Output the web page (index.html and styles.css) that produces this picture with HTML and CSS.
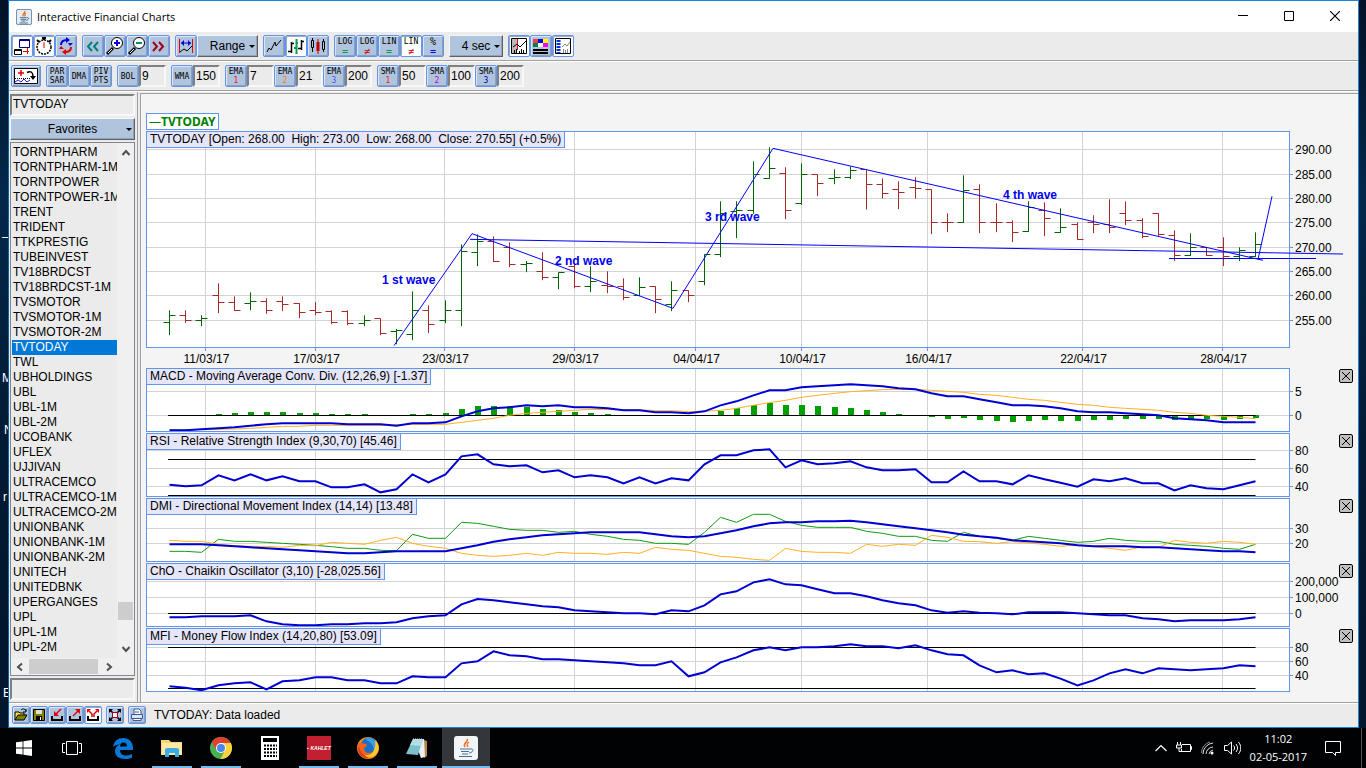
FILE: index.html
```html
<!DOCTYPE html>
<html lang="en">
<head>
    <meta charset="UTF-8">
    <meta name="viewport" content="width=device-width, initial-scale=1.0">
    <title>Interactive Financial Charts</title>
    <link rel="stylesheet" href="styles.css">
</head>
<body>
    <!-- Desktop labels peeking out behind the window -->
    <div class="desktop-labels" aria-hidden="true">
        <span class="peek peek-1">–</span>
        <span class="peek peek-2">M</span>
        <span class="peek peek-3">N</span>
        <span class="peek peek-4">r</span>
        <span class="peek peek-5">E</span>
    </div>

    <div class="window">
        <header class="titlebar">
            <svg class="java-icon" viewBox="0 0 24 24" width="16" height="16">
                <rect x="0.5" y="0.5" width="23" height="23" rx="3" fill="#e4ebf1" stroke="#5f7f9f" stroke-width="1.500"/>
                <path d="M13 3c2 3-5 4-2 8M15 6c-3 2-2 3-1 5" fill="none" stroke="#e8762c" stroke-width="2"/>
                <path d="M6 13h10M7 15.500h8M8 18h6M5 21h13M16 13c5-1 3 4-1 4" fill="none" stroke="#4b7195" stroke-width="1.500"/>
            </svg>
            <h1>Interactive Financial Charts</h1>
            <div class="window-controls">
                <button type="button" aria-label="Minimize"><svg viewBox="0 0 10 10" width="10" height="10"><path d="M0 4.500h10" stroke="#000"/></svg></button>
                <button type="button" aria-label="Maximize"><svg viewBox="0 0 10 10" width="10" height="10"><path d="M.5.500h9v9h-9z" fill="none" stroke="#000"/></svg></button>
                <button type="button" aria-label="Close"><svg viewBox="0 0 10 10" width="10" height="10"><path d="M0 0l10 10M10 0L0 10" stroke="#000" stroke-width="1.200"/></svg></button>
            </div>
        </header>

        <!-- Main toolbar -->
        <div class="toolbar">
            <div class="group">
                <button type="button" class="tool on" aria-label="Detach window"><svg viewBox="0 0 20 20"><path d="M7.500 3.500h10v8h-10zM7 4.500h11" fill="none" stroke="#000080"/><path d="M2.500 13.500h7v5h-7zM2 14.500h8" fill="none" stroke="#000"/><path d="M11 15.500h6M15.500 12v6" stroke="#e00000"/></svg></button>
                <button type="button" class="tool on" aria-label="Timer"><svg viewBox="0 0 20 20"><circle cx="10" cy="11" r="7" fill="none" stroke="#000" stroke-width="1.500" stroke-dasharray="2 1"/><path d="M8 2h4M10 2v2M3 4l2 2M17 4l-2 2" stroke="#000" stroke-width="2"/><path d="M10 6v6" stroke="#e00000"/></svg></button>
                <button type="button" class="tool" aria-label="Refresh"><svg viewBox="0 0 20 20"><path d="M5 9c0-4 2-5 6-5" fill="none" stroke="#0000d8" stroke-width="2"/><path d="M10 1l4 3-4 3zM12 7h5l-3 3z" fill="#0000d8"/><path d="M15 11c0 4-2 5-6 5" fill="none" stroke="#e00000" stroke-width="2"/><path d="M10 13l-4 3 4 3zM3 13h5l-3-3z" fill="#e00000"/></svg></button>
            </div>
            <div class="group">
                <button type="button" class="tool" aria-label="Scroll back"><svg viewBox="0 0 20 20"><path d="M9 6l-4 4.500L9 15M15 6l-4 4.500 4 4.500" fill="none" stroke="#008080" stroke-width="2"/></svg></button>
                <button type="button" class="tool" aria-label="Zoom in"><svg viewBox="0 0 20 20"><path d="M2 18l6-6" stroke="#000" stroke-width="3"/><path d="M3 17l4-4" stroke="#fff"/><circle cx="12" cy="7" r="5.500" fill="#fff" stroke="#000"/><path d="M9 7h6M12 4v6" stroke="#0000d8" stroke-width="2"/></svg></button>
                <button type="button" class="tool" aria-label="Zoom out"><svg viewBox="0 0 20 20"><path d="M2 18l6-6" stroke="#000" stroke-width="3"/><path d="M3 17l4-4" stroke="#fff"/><circle cx="12" cy="7" r="5.500" fill="#fff" stroke="#000"/><path d="M9 7h6" stroke="#009050" stroke-width="2"/></svg></button>
                <button type="button" class="tool" aria-label="Scroll forward"><svg viewBox="0 0 20 20"><path d="M4 6l4 4.500L4 15M10 6l4 4.500-4 4.500" fill="none" stroke="#a00020" stroke-width="2"/></svg></button>
            </div>
            <div class="group">
                <button type="button" class="tool" aria-label="Fit range"><svg viewBox="0 0 20 20"><path d="M3.500 3v14M16.500 3v14" stroke="#e00000"/><path d="M5 7h10" stroke="#0000d8"/><path d="M8 4L5 7l3 3zM12 4l3 3-3 3z" fill="#0000d8"/><path d="M4 16l4-3 3 2 5-5" fill="none" stroke="#000"/></svg></button>
                <label class="combo combo-range"><select aria-label="Range"><option>Range</option></select></label>
            </div>
            <div class="group">
                <button type="button" class="tool" aria-label="Line chart"><svg viewBox="0 0 20 20"><path d="M3 16l2-4 2 2 4-8 1 4 5-6" fill="none" stroke="#000"/></svg></button>
                <button type="button" class="tool on" aria-label="Bar chart"><svg viewBox="0 0 20 20"><path d="M5.500 6v11M2 15.500h3M5 7.500h3M15.500 4v10M12 12.500h3M15 5.500h3" stroke="#000" stroke-width="1.500"/><path d="M10.500 3v15M8 12h2M10 7h2" stroke="#00a050" stroke-width="2"/></svg></button>
                <button type="button" class="tool" aria-label="Candle chart"><svg viewBox="0 0 20 20"><path d="M4.500 2v14M15.500 3v13" stroke="#000"/><path d="M3.500 4.500h2v7h-2zM14.500 5.500h2v8h-2z" fill="#b0c4de" stroke="#000"/><path d="M10 3v15" stroke="#c00000"/><path d="M8.500 6h3v9h-3z" fill="#c00000"/></svg></button>
            </div>
            <div class="group">
                <button type="button" class="tool caps">LOG<b class="green">=</b></button>
                <button type="button" class="tool caps">LOG<b class="red">≠</b></button>
                <button type="button" class="tool caps">LIN<b class="green">=</b></button>
                <button type="button" class="tool caps on">LIN<b class="red">≠</b></button>
                <button type="button" class="tool caps"><span class="percent">%</span><b class="blue">=</b></button>
            </div>
            <label class="combo combo-sec"><select aria-label="Refresh interval"><option>4 sec</option></select></label>
            <div class="group">
                <button type="button" class="tool on" aria-label="Crosshair"><svg viewBox="0 0 20 20"><path d="M2.500 2.500h15v15h-15z" fill="#fff" stroke="#000"/><path d="M3 3h5v14H3z" fill="#bbb"/><path d="M8.500 3v11" stroke="#e00000"/><path d="M4 11l4-3 3 3 6-6M5.500 14v3M7.500 13v4M10.500 15v2M12.500 13v4M14.500 14v3" fill="none" stroke="#000"/></svg></button>
                <button type="button" class="tool" aria-label="Colors"><svg viewBox="0 0 20 20"><path d="M2 3h5v4H2z" fill="#f04050"/><path d="M7 3h5v4H7z" fill="#00f"/><path d="M12 3h5v4h-5z" fill="#ff0"/><path d="M2 7h5v4H2z" fill="#008040"/><path d="M7 7h5v4H7z" fill="#fff"/><path d="M12 7h5v4h-5z" fill="#f0f"/><path d="M2 14h15M2 17h15" stroke="#000" stroke-width="2"/></svg></button>
                <button type="button" class="tool on" aria-label="Symbol list"><svg viewBox="0 0 20 20"><path d="M2.500 2.500h15v15h-15z" fill="#fff" stroke="#000"/><path d="M5.500 4v13" stroke="#0030e0" stroke-width="4" stroke-dasharray="2 1"/><path d="M9 11l3-3 2 2 3-4M10.500 13v4M12.500 14v3M14.500 13v4" fill="none" stroke="#888"/></svg></button>
            </div>
        </div>

        <!-- Overlay toolbar -->
        <div class="toolbar">
            <button type="button" class="tool wide" aria-label="Add study"><svg viewBox="0 0 28 20"><path d="M2.500 2.500h23v15h-23z" fill="#fff" stroke="#000"/><path d="M6 7h6M9 4v6" stroke="#e00000" stroke-width="1.500"/><path d="M15 6.500c4-2 6 0 6 4" fill="none" stroke="#000" stroke-width="1.500"/><path d="M18 10h6l-3 4z"/><path d="M3 12.500h15" stroke="#000" stroke-dasharray="1 1"/><path d="M3 16l3-2 3 2 3-3 3 3 3-2" fill="none" stroke="#2020f0"/></svg></button>
            <div class="group">
                <button type="button" class="tool">PAR SAR</button>
                <button type="button" class="tool">DMA</button>
                <button type="button" class="tool">PIV PTS</button>
            </div>
            <div class="group">
                <button type="button" class="tool">BOL</button>
                <input class="period" type="text" value="9" aria-label="BOL period">
            </div>
            <div class="group">
                <button type="button" class="tool">WMA</button>
                <input class="period" type="text" value="150" aria-label="WMA period">
            </div>
            <div class="group">
                <button type="button" class="tool">EMA <span class="n-red">1</span></button>
                <input class="period" type="text" value="7" aria-label="EMA 1 period">
                <button type="button" class="tool">EMA <span class="n-orange">2</span></button>
                <input class="period" type="text" value="21" aria-label="EMA 2 period">
                <button type="button" class="tool">EMA <span class="n-violet">3</span></button>
                <input class="period" type="text" value="200" aria-label="EMA 3 period">
            </div>
            <div class="group">
                <button type="button" class="tool">SMA <span class="n-red">1</span></button>
                <input class="period" type="text" value="50" aria-label="SMA 1 period">
                <button type="button" class="tool">SMA <span class="n-magenta">2</span></button>
                <input class="period" type="text" value="100" aria-label="SMA 2 period">
                <button type="button" class="tool">SMA <span class="n-blue">3</span></button>
                <input class="period" type="text" value="200" aria-label="SMA 3 period">
            </div>
        </div>

        <main>
            <!-- Symbol list -->
            <aside>
                <input class="field" type="text" value="TVTODAY" aria-label="Symbol">
                <label class="combo combo-fav"><select aria-label="Symbol group"><option>Favorites</option></select></label>
                <div class="listbox">
                    <div class="list-row">
                        <ul role="listbox" aria-label="Symbols">
                            <li>TORNTPHARM</li>
                            <li>TORNTPHARM-1M</li>
                            <li>TORNTPOWER</li>
                            <li>TORNTPOWER-1M</li>
                            <li>TRENT</li>
                            <li>TRIDENT</li>
                            <li>TTKPRESTIG</li>
                            <li>TUBEINVEST</li>
                            <li>TV18BRDCST</li>
                            <li>TV18BRDCST-1M</li>
                            <li>TVSMOTOR</li>
                            <li>TVSMOTOR-1M</li>
                            <li>TVSMOTOR-2M</li>
                            <li class="selected">TVTODAY</li>
                            <li>TWL</li>
                            <li>UBHOLDINGS</li>
                            <li>UBL</li>
                            <li>UBL-1M</li>
                            <li>UBL-2M</li>
                            <li>UCOBANK</li>
                            <li>UFLEX</li>
                            <li>UJJIVAN</li>
                            <li>ULTRACEMCO</li>
                            <li>ULTRACEMCO-1M</li>
                            <li>ULTRACEMCO-2M</li>
                            <li>UNIONBANK</li>
                            <li>UNIONBANK-1M</li>
                            <li>UNIONBANK-2M</li>
                            <li>UNITECH</li>
                            <li>UNITEDBNK</li>
                            <li>UPERGANGES</li>
                            <li>UPL</li>
                            <li>UPL-1M</li>
                            <li>UPL-2M</li>
                        </ul>
                        <div class="vscroll">
                            <svg viewBox="0 0 10 10" width="10" height="10"><path d="M1.500 7L5 3l3.500 4" fill="none" stroke="#505050" stroke-width="2"/></svg>
                            <div class="vthumb"></div>
                            <svg viewBox="0 0 10 10" width="10" height="10"><path d="M1.500 3L5 7l3.500-4" fill="none" stroke="#505050" stroke-width="2"/></svg>
                        </div>
                    </div>
                    <div class="hscroll">
                        <svg viewBox="0 0 10 10" width="10" height="10"><path d="M7 1.500L3 5l4 3.500" fill="none" stroke="#505050" stroke-width="2"/></svg>
                        <div class="hthumb"></div>
                        <svg viewBox="0 0 10 10" width="10" height="10"><path d="M3 1.500L7 5 3 8.500" fill="none" stroke="#505050" stroke-width="2"/></svg>
                    </div>
                </div>
                <input class="field" type="text" aria-label="Filter">
            </aside>

            <!-- Charts -->
            <div class="charts">
                <div class="legend"><span>—</span>TVTODAY</div>
                <section class="panel price">
                    <svg class="plot" id="price"></svg>
                    <h2>TVTODAY [Open: 268.00  High: 273.00  Low: 268.00  Close: 270.55] (+0.5%)</h2>
                </section>
                <section class="panel">
                    <svg class="plot" id="macd"></svg>
                    <h2>MACD - Moving Average Conv. Div. (12,26,9) [-1.37]</h2>
                    <button type="button" class="close" aria-label="Close MACD"><svg viewBox="0 0 12 12"><path d="M2 2l8 8M10 2l-8 8" stroke="#000"/></svg></button>
                </section>
                <section class="panel">
                    <svg class="plot" id="rsi"></svg>
                    <h2>RSI - Relative Strength Index (9,30,70) [45.46]</h2>
                    <button type="button" class="close" aria-label="Close RSI"><svg viewBox="0 0 12 12"><path d="M2 2l8 8M10 2l-8 8" stroke="#000"/></svg></button>
                </section>
                <section class="panel">
                    <svg class="plot" id="dmi"></svg>
                    <h2>DMI - Directional Movement Index (14,14) [13.48]</h2>
                    <button type="button" class="close" aria-label="Close DMI"><svg viewBox="0 0 12 12"><path d="M2 2l8 8M10 2l-8 8" stroke="#000"/></svg></button>
                </section>
                <section class="panel">
                    <svg class="plot" id="cho"></svg>
                    <h2>ChO - Chaikin Oscillator (3,10) [-28,025.56]</h2>
                    <button type="button" class="close" aria-label="Close ChO"><svg viewBox="0 0 12 12"><path d="M2 2l8 8M10 2l-8 8" stroke="#000"/></svg></button>
                </section>
                <section class="panel">
                    <svg class="plot" id="mfi"></svg>
                    <h2>MFI - Money Flow Index (14,20,80) [53.09]</h2>
                    <button type="button" class="close" aria-label="Close MFI"><svg viewBox="0 0 12 12"><path d="M2 2l8 8M10 2l-8 8" stroke="#000"/></svg></button>
                </section>
            </div>
        </main>

        <!-- Status bar -->
        <footer class="statusbar">
            <div class="group">
                <button type="button" class="tool small" aria-label="Open"><svg viewBox="0 0 16 16"><path d="M2 13V5h4l1 1h4v2" fill="#ffe040" stroke="#000"/><path d="M2 13l3-5h9l-3 5z" fill="#808000" stroke="#000"/><path d="M8 3c2-2 4-1 5 1M13 2v3h-3" fill="none" stroke="#000"/></svg></button>
                <button type="button" class="tool small" aria-label="Save"><svg viewBox="0 0 16 16"><path d="M2.500 2.500h11v11h-11z" fill="#808000" stroke="#000"/><path d="M5 3h6v4H5z" fill="#ddd"/><path d="M5 9h6v5H5z"/><path d="M9 10h1v3H9z" fill="#fff"/></svg></button>
                <button type="button" class="tool small" aria-label="Import"><svg viewBox="0 0 16 16"><path d="M3 9v4h10V9" fill="none" stroke="#000" stroke-width="2"/><path d="M12 2L7 7" stroke="#e00000" stroke-width="1.500"/><path d="M5 4v5h5z" fill="#e00000"/></svg></button>
                <button type="button" class="tool small" aria-label="Export"><svg viewBox="0 0 16 16"><path d="M3 9v4h10V9" fill="none" stroke="#000" stroke-width="2"/><path d="M6 9l5-5" stroke="#e00000" stroke-width="1.500"/><path d="M8 2h5v5z" fill="#e00000"/></svg></button>
                <button type="button" class="tool small on" aria-label="Export all"><svg viewBox="0 0 16 16"><path d="M3 9v4h10V9" fill="none" stroke="#000" stroke-width="2"/><path d="M7 10V7L4 4M9 10V7l3-3" fill="none" stroke="#e00000" stroke-width="1.500"/><path d="M2 2h4L2 6zM14 2h-4l4 4z" fill="#e00000"/></svg></button>
            </div>
            <button type="button" class="tool small" aria-label="Full screen"><svg viewBox="0 0 16 16"><path d="M2 6V2h4zM10 2h4v4zM14 10v4h-4zM6 14H2v-4z"/><path d="M3 3l3 3M13 3l-3 3M13 13l-3-3M3 13l3-3" stroke="#000" stroke-width="1.500"/><path d="M5.500 5.500h5v5h-5z" fill="#fff" stroke="#a00020"/></svg></button>
            <button type="button" class="tool small" aria-label="Print"><svg viewBox="0 0 16 16"><path d="M5 7V2h5l2 2v3" fill="#fff" stroke="#3c5a96"/><path d="M6 5h4" stroke="#3c5a96"/><path d="M2.500 7.500h11v4h-11z" fill="#d8e4f8" stroke="#3c5a96"/><path d="M4 11.500h8v2H4z" fill="#fff" stroke="#3c5a96"/></svg></button>
            <p>TVTODAY: Data loaded</p>
        </footer>
    </div>

    <!-- Taskbar -->
    <div class="taskbar">
        <button type="button" class="task" aria-label="Start"><svg viewBox="0 0 16 16" width="16" height="16"><path d="M0 2.300L6.600 1.400v6.200H0zM7.400 1.300L16 0v7.600H7.400zM0 8.400h6.600v6.200L0 13.700zM7.400 8.400H16V16l-8.600-1.300z" fill="#fff"/></svg></button>
        <button type="button" class="task" aria-label="Task view"><svg viewBox="0 0 20 16" width="20" height="16"><path d="M4.500 1.500h11v13h-11zM3 3.500H.5v9H3M17 3.500h2.500v9H17" fill="none" stroke="#fff"/></svg></button>
        <div class="tasks">
            <button type="button" class="task" aria-label="Edge"><svg viewBox="0 0 22 22" width="22" height="22"><path d="M1 10C2 4 6 1 11 1c6 0 10 4 10 10v2H8c0 4 3 5.500 6 5.500 2 0 4-.5 6-1.500v3.500c-2 1-4 1.500-7 1.500-6 0-10-3-10-8 0-3 2-5.500 5-7-2 .5-5 1-7 3zM8 9.500h7c0-3-1.500-4-3.500-4S8 7 8 9.500z" fill="#0a78d8"/></svg></button>
            <button type="button" class="task open" aria-label="File Explorer"><svg viewBox="0 0 22 20" width="22" height="20"><path d="M0 2h8l2 2h11v13H0z" fill="#f5d67a"/><path d="M1 5h20v12H1z" fill="#ffe9a2"/><path d="M4 19v-8l2-1h10l2 1v8h-4v-4H8v4z" fill="#3aade4"/></svg></button>
            <button type="button" class="task open" aria-label="Chrome"><svg viewBox="0 0 22 22" width="22" height="22"><circle cx="11" cy="11" r="11" fill="#4caf50"/><path d="M11 11L1.500 5.500A11 11 0 0 1 20.500 5.500z" fill="#e0402f"/><path d="M11 6h9.800A11 11 0 0 1 10.500 22L15 13z" fill="#fdd23c"/><path d="M2 5l4.500 8L11 6z" fill="#e0402f"/><circle cx="11" cy="11" r="5" fill="#fff"/><circle cx="11" cy="11" r="4" fill="#4587f0"/></svg></button>
            <button type="button" class="task" aria-label="Calculator"><svg viewBox="0 0 18 24" width="18" height="24"><path d="M0 0h18v24H0z" fill="#fff"/><path d="M2 2h14v4H2z"/><path d="M3 9.500h13M3 13h13M3 16.500h13M3 20h13" stroke="#000" stroke-width="2" stroke-dasharray="2 1"/></svg></button>
            <button type="button" class="task open" aria-label="Trading app"><span class="red-tile">▪ KAHLET</span></button>
            <button type="button" class="task open" aria-label="Firefox"><svg viewBox="0 0 22 22" width="22" height="22"><circle cx="11" cy="11" r="11" fill="#f7921e"/><circle cx="12" cy="9" r="8.500" fill="#1f6fc4"/><path d="M8 2c3-2 8-1 10 2 2 4 1 8-1 10 0-5-2-8-9-12z" fill="#3ba2e8"/><path d="M1 5l3 1 5 1 1 2-3 2c0 5 5 6 8 4 0 3-3 5-6 4-5-1-8-6-8-14z" fill="#f0641e"/><path d="M18 3c5 5 5 12-1 16-5 3-12 1-14-3 8 6 17 0 15-13z" fill="#ffc62e"/><path d="M1 8c-2 8 4 15 12 13-5-1-10-6-12-13z" fill="#d8401c"/></svg></button>
            <button type="button" class="task open" aria-label="Notepad"><svg viewBox="0 0 22 22" width="22" height="22"><path d="M18 3l3 1v15l-3 2z" fill="#b58a48"/><path d="M8 2h10l1 18-4 1z" fill="#e8f0f2"/><path d="M7 2h10l-5 16-12-1z" fill="#7cc0cc"/><path d="M7 2h10l-2 7-11-1z" fill="#b4dde4"/><path d="M7 2h10" stroke="#ddd" stroke-dasharray="1 1"/></svg></button>
            <button type="button" class="task open active" aria-label="Interactive Financial Charts"><svg viewBox="0 0 24 24" width="24" height="24"><rect width="24" height="24" rx="3" fill="#f2f5f8"/><path d="M13 3c2 3-5 4-2 8M15 6c-3 2-2 3-1 5" fill="none" stroke="#e8762c" stroke-width="1.500"/><path d="M6 13h10M7 15.500h8M8 18h6M5 20.500h13M16 13c5-1 3 4-1 4" fill="none" stroke="#4b7195"/></svg></button>
        </div>
        <div class="tray">
            <svg viewBox="0 0 12 8" width="12" height="8"><path d="M.5 7L6 1.500 11.500 7" fill="none" stroke="#fff" stroke-width="1.200"/></svg>
            <svg viewBox="0 0 16 14" width="16" height="14"><path d="M6 3.500h8.500v7H5.500V8M14.500 5.500h1v3h-1M1.500 1v3M4.500 1v3M.5 4h5v3h-5zM3 7v3.500h3" fill="none" stroke="#fff"/></svg>
            <svg viewBox="0 0 14 14" width="14" height="14"><path d="M2 13A11 11 0 0 1 12 2M5 13a8 8 0 0 1 7-7M8 13a5 5 0 0 1 4-4" fill="none" stroke="#ddd"/><path d="M.500 12A11 11 0 0 1 9 1" fill="none" stroke="#888"/><circle cx="11" cy="12" r="1.500" fill="#fff"/></svg>
            <svg viewBox="0 0 17 14" width="17" height="14"><path d="M.5 4.500h3L7.500 1v12L3.500 9.500h-3zM9.500 4.500c1.500 2 1.500 3 0 5M12 3c2 3 2 5 0 8M14.500 1c3 4 3 8 0 12" fill="none" stroke="#fff"/></svg>
            <div class="clock"><span>11:02</span><span>02-05-2017</span></div>
            <svg class="notify" viewBox="0 0 16 16" width="16" height="16"><path d="M.5 1.500h15v11h-5v3l-3-3h-7z" fill="none" stroke="#fff"/></svg>
        </div>
    </div>
    <script src="charts.js"></script>
</body>
</html>
```
FILE: styles.css
```css
* {
    box-sizing: border-box;
}

body {
    margin: 0;
    height: 100vh;
    display: flex;
    flex-direction: column;
    overflow: hidden;
    background: linear-gradient(#021226, #03284a 25%, #021a33 60%, #02152b);
    font-family: "Liberation Sans", Arial, sans-serif;
    font-size: 12px;
    color: #000;
}

h1, h2, p, ul {
    margin: 0;
    padding: 0;
    font-size: 12px;
    font-weight: normal;
}

button, input, select {
    font-family: inherit;
    font-size: 12px;
    color: inherit;
    margin: 0;
    padding: 0;
    border-radius: 0;
}

/* Desktop behind the window */
.peek {
    position: absolute;
    color: #fff;
    line-height: 14px;
}

.peek-1 { left: 2px; top: 230px; }
.peek-2 { left: 2px; top: 371px; }
.peek-3 { left: 4px; top: 423px; }
.peek-4 { left: 3px; top: 490px; }
.peek-5 { left: 3px; top: 686px; }

/* Window frame */
.window {
    position: relative;
    flex: 1;
    min-height: 0;
    margin: 0 7px 0 8px;
    display: flex;
    flex-direction: column;
    border: 1px solid #1883d7;
    border-left-color: #0a64ad;
    background: #ebebeb;
}

.titlebar {
    display: flex;
    align-items: center;
    height: 31px;
    padding-left: 7px;
    background: #fff;
}

.titlebar h1 {
    flex: 1;
    margin-left: 5px;
    font-family: "Open Sans", "Noto Sans", sans-serif;
    font-size: 11px;
}

.window-controls {
    display: flex;
    height: 100%;
}

.window-controls button {
    width: 46px;
    border: 0;
    background: none;
}

/* Toolbars */
.toolbar {
    display: flex;
    gap: 5px;
    height: 30px;
    padding: 3px 2px;
    border-bottom: 1px solid #fff;
    box-shadow: inset 0 -1px #a0a0a0;
}

.group {
    display: flex;
}

.tool {
    display: flex;
    flex-direction: column;
    align-items: center;
    justify-content: center;
    width: 22px;
    height: 22px;
    border: 1px solid #6495ed;
    border-radius: 2px;
    background: #b0c4de;
    box-shadow: inset 1px 1px #dce6f2, inset -1px -1px #8ca0bc;
    font-family: "DejaVu Sans Mono", monospace;
    font-size: 8px;
    line-height: 9px;
    white-space: normal;
}

.tool svg {
    display: block;
    width: 20px;
    height: 20px;
}

.tool.wide {
    width: 30px;
}

.tool.wide svg {
    width: 28px;
}

.tool.on {
    background: #fff;
    box-shadow: inset 1px 1px #9ab;
}

.tool.caps {
    line-height: 10px;
}

.tool.caps b {
    font-size: 10px;
    font-weight: normal;
    line-height: 9px;
}

.percent {
    font-size: 10px;
}

.green { color: #00a050; }
.red { color: #d00000; }
.blue { color: #0000ff; }
.n-red { color: #f02000; }
.n-orange { color: #ff8000; }
.n-violet { color: #5050f0; }
.n-magenta { color: #c000c0; }
.n-blue { color: #0000c0; }

.period {
    width: 27px;
    height: 22px;
    padding-left: 1px;
    border: 2px solid;
    border-color: #808080 #f8f8f8 #f8f8f8 #808080;
    background: #ebebeb;
}

/* Drop-downs */
.combo {
    position: relative;
    display: block;
    height: 22px;
}

.combo select {
    appearance: none;
    width: 100%;
    height: 100%;
    border: 1px solid;
    border-color: #f4f8fc #606060 #606060 #f4f8fc;
    box-shadow: inset -1px -1px #90a4c0;
    background: #b0c4de;
    text-align: center;
    text-align-last: center;
}

.combo::after {
    content: "";
    position: absolute;
    right: 3px;
    top: 10px;
    border: 3px solid transparent;
    border-top-color: #000;
    border-bottom: 0;
}

.combo-range {
    width: 61px;
}

.combo-sec {
    width: 54px;
}

/* Layout of list and charts */
main {
    flex: 1;
    min-height: 0;
    display: flex;
}

aside {
    width: 129px;
    padding: 2px 2px 2px 1px;
    display: flex;
    flex-direction: column;
    gap: 2px;
    border-right: 1px solid #a0a0a0;
}

.field {
    width: 100%;
    height: 22px;
    padding: 0 1px 2px;
    border: 2px solid;
    border-color: #808080 #f8f8f8 #f8f8f8 #808080;
    background: #ebebeb;
}

.listbox {
    flex: 1;
    min-height: 0;
    display: flex;
    flex-direction: column;
    border: 1px solid #828790;
    background: #ebebeb;
}

.list-row {
    flex: 1;
    min-height: 0;
    display: flex;
}

.list-row ul {
    flex: 1;
    min-width: 0;
    padding: 2px 0 0 1px;
    overflow: hidden;
    list-style: none;
}

.list-row li {
    height: 15px;
    padding-left: 1px;
    line-height: 15px;
    white-space: nowrap;
    overflow: hidden;
}

.list-row li.selected {
    background: #0078d7;
    color: #fff;
}

.vscroll {
    width: 17px;
    padding: 5px 0 4px;
    display: flex;
    flex-direction: column;
    align-items: center;
    background: #f0f0f0;
}

.vthumb {
    width: 15px;
    height: 18px;
    margin-top: auto;
    margin-bottom: 24px;
    background: #cdcdcd;
}

.hscroll {
    display: flex;
    align-items: center;
    height: 17px;
    padding: 1px 20px 1px 4px;
    gap: 4px;
    background: #f0f0f0;
}

.hthumb {
    flex: 1;
    height: 15px;
    margin-right: 2px;
    background: #cdcdcd;
}

/* Charts */
.charts {
    flex: 1;
    min-width: 0;
    margin: 1px 0 0 2px;
    padding: 19px 1px 0 5px;
    border-top: 1px solid #a0a0a0;
    border-left: 1px solid #a0a0a0;
    background: #f4f4f4;
}

.legend {
    width: max-content;
    height: 17px;
    margin-bottom: 1px;
    padding: 0 2px;
    border: 1px solid #6495ed;
    background: #fff;
    color: #008000;
    font-family: "Noto Sans", sans-serif;
    font-weight: bold;
    line-height: 15px;
}

.legend span {
    font-weight: normal;
}

.panel {
    position: relative;
    height: 65px;
}

.panel.price {
    height: 237px;
}

.plot {
    display: block;
    width: 100%;
    height: 100%;
}

.panel h2 {
    position: absolute;
    top: 0;
    left: 0;
    height: 17px;
    padding: 0 3px;
    border: 1px solid #6495ed;
    background: #e6e6fa;
    line-height: 15px;
    white-space: pre;
}

.panel .close {
    position: absolute;
    top: 1px;
    right: 4px;
    width: 14px;
    height: 14px;
    border: 1px solid #000;
    border-radius: 2px;
    background: #c0c0c0;
}

.close svg {
    display: block;
}

.plot .grid { stroke: #d3d3d3; }
.plot .level { stroke: #000; }
.plot .frame { stroke: #6495ed; fill: none; }
.plot .back { fill: #fff; }
.plot .tick { stroke: #6495ed; }
.plot .up { stroke: #006400; }
.plot .down { stroke: #a52a2a; }
.plot .bars { fill: #00a000; }
.plot .trend { stroke: #0000ff; fill: none; }
.plot .note { fill: #0000ee; font-weight: bold; }
.plot .main { stroke: #0000d2; stroke-width: 2; fill: none; }
.plot .orange { stroke: #ffb020; fill: none; }
.plot .green-line { stroke: #109c10; fill: none; }

/* Status bar */
.statusbar {
    display: flex;
    align-items: center;
    gap: 4px;
    height: 25px;
    padding: 0 3px;
    border-top: 1px solid #a0a0a0;
    box-shadow: inset 0 1px #fff;
}

.tool.small {
    width: 18px;
    height: 18px;
}

.tool.small svg {
    width: 16px;
    height: 16px;
}

.statusbar p {
    margin-left: 4px;
}

/* Taskbar */
.taskbar {
    display: flex;
    align-items: stretch;
    height: 40px;
    background: #010204;
    color: #fff;
}

.task {
    display: flex;
    align-items: center;
    justify-content: center;
    position: relative;
    width: 48px;
    border: 0;
    background: none;
}

.tasks {
    flex: 1;
    display: flex;
    gap: 1px;
    margin-left: 3px;
}

.task.open::after {
    content: "";
    position: absolute;
    left: 4px;
    right: 4px;
    bottom: 0;
    height: 2px;
    background: #76b9ed;
}

.task.active {
    background: #33373b;
}

.task.active::after {
    left: 0;
    right: 0;
}

.red-tile {
    width: 24px;
    height: 24px;
    background: #c02030;
    color: #fff;
    font-size: 5px;
    font-style: italic;
    font-weight: bold;
    line-height: 24px;
    white-space: nowrap;
}

.tray {
    display: flex;
    align-items: center;
    gap: 9px;
    margin-right: 4px;
    padding-right: 20px;
    border-right: 1px solid #555;
}

.clock {
    display: flex;
    flex-direction: column;
    align-items: center;
    line-height: 18px;
    font-family: "Open Sans", "Noto Sans", sans-serif;
    font-size: 11px;
}

.notify {
    margin-left: 9px;
}
```
FILE: charts.js
```js
// Y readings are thirds of a pixel: the price chart counts from its own top,
// the indicators count from the top of the indicator stack.
const UNIT = 3;
const AXIS_WIDTH = 68;   // room right of the plot for the scale
const BASE_WIDTH = 1143; // plot width that the x readings refer to
const FIRST_BAR = 24;
const LAST_BAR = 1110;

const dates = [[59, '11/03/17'], [169, '17/03/17'], [298, '23/03/17'], [428, '29/03/17'], [549, '04/04/17'],
    [655, '10/04/17'], [781, '16/04/17'], [936, '22/04/17'], [1076, '28/04/17']];

// open, high, low, close
const bars = [
    [577, 541, 614, 556], [556, 541, 577, 571], [571, 556, 587, 565], [496, 460, 548, 517], [517, 499, 541, 541],
    [520, 487, 539, 514], [514, 505, 550, 541], [514, 499, 542, 523], [520, 520, 563, 547], [541, 516, 554, 547],
    [544, 541, 581, 577], [544, 541, 584, 580], [580, 556, 587, 571], [565, 565, 614, 610], [604, 597, 641, 601],
    [613, 484, 629, 541], [541, 526, 608, 583], [571, 511, 578, 541], [541, 343, 587, 364], [367, 313, 407, 334],
    [334, 319, 395, 394], [352, 337, 410, 403], [403, 393, 425, 400], [424, 367, 449, 442], [442, 427, 476, 427],
    [410, 404, 473, 469], [469, 409, 485, 454], [466, 424, 488, 469], [469, 445, 509, 502], [497, 442, 497, 472],
    [469, 469, 548, 508], [523, 454, 542, 481], [481, 481, 515, 496], [454, 373, 464, 373], [373, 214, 380, 250],
    [244, 214, 323, 241], [241, 94, 250, 133], [145, 52, 145, 115], [130, 112, 266, 241], [220, 100, 223, 133],
    [133, 133, 197, 160], [145, 118, 161, 142], [142, 110, 146, 121], [119, 119, 237, 163], [163, 145, 204, 190],
    [178, 154, 236, 187], [172, 142, 204, 175], [178, 178, 311, 277], [277, 250, 305, 277], [277, 136, 277, 181],
    [178, 163, 308, 277], [277, 220, 305, 277], [277, 271, 335, 307], [304, 214, 304, 232], [241, 217, 317, 265],
    [307, 235, 307, 292], [283, 277, 328, 328], [277, 256, 308, 283], [283, 208, 308, 292], [250, 214, 284, 271],
    [271, 265, 323, 319], [250, 250, 316, 313], [316, 301, 392, 376], [376, 310, 376, 352], [352, 352, 376, 376],
    [352, 322, 407, 380], [380, 352, 392, 361], [380, 307, 380, 343]
];

const priceScale = [[58, '290.00'], [133, '285.00'], [205, '280.00'], [277, '275.00'], [352, '270.00'],
    [424, '265.00'], [496, '260.00'], [571, '255.00']];

const trends = [
    [[248, 647], [326, 311], [527, 535], [627, 55], [1117, 391]],
    [[324, 328], [1197, 372]],
    [[1023, 385.5], [1170, 385.5]],
    [[1112, 388], [1126, 199]]
];

const notes = [[236, 461, '1 st wave'], [409, 404, '2 nd wave'], [559, 272, '3 rd wave'], [857, 206, '4 th wave']];

const indicators = [
    {
        id: 'macd',
        scale: [[94, '5'], [166, '0']],
        levels: [166],
        histogram: [166, 166, 166, 163, 160, 157, 157, 157, 160, 160, 163, 163, 163, 166, 166, 163, 163, 160, 148, 139,
            139, 139, 141, 148, 151, 157, 160, 163, 166, 166, 170, 170, 170, 166, 154, 145, 136, 128, 136, 136,
            139, 142, 145, 151, 157, 163, 166, 173, 179, 176, 182, 185, 188, 185, 182, 185, 185, 182, 182, 179,
            179, 179, 182, 182, 179, 182, 179, 176],
        lines: [
            ['orange', [209, 209, 208, 208, 207, 205, 202, 199, 199, 196, 196, 196, 196, 196, 194, 193, 193, 193, 187, 181,
                175, 166, 160, 157, 154, 151, 148, 149, 149, 149, 152, 152, 155, 154, 151, 145, 136, 128, 121, 112,
                106, 100, 95, 92, 89, 88, 88, 91, 94, 97, 103, 106, 112, 118, 121, 127, 133, 136, 142, 145,
                148, 151, 157, 160, 166, 169, 172, 176]],
            ['main', [211, 211, 208, 205, 202, 197, 193, 190, 190, 190, 190, 193, 193, 193, 197, 190, 190, 187, 169, 154,
                145, 142, 136, 139, 136, 142, 142, 145, 151, 151, 157, 157, 160, 154, 136, 124, 106, 91, 91, 82,
                79, 76, 73, 76, 79, 85, 88, 100, 109, 109, 118, 127, 136, 136, 139, 145, 154, 157, 157, 160,
                163, 166, 175, 178, 181, 187, 187, 187]]
        ]
    },
    {
        id: 'rsi',
        scale: [[271, '80'], [325, '60'], [379, '40']],
        levels: [298, 406],
        lines: [
            ['main', [374, 379, 376, 346, 361, 343, 361, 349, 364, 364, 382, 382, 373, 397, 388, 343, 367, 343, 289, 283,
                313, 319, 316, 337, 331, 352, 346, 352, 370, 352, 370, 355, 361, 313, 286, 286, 271, 268, 322, 301,
                313, 310, 304, 322, 331, 331, 328, 367, 367, 334, 364, 364, 373, 346, 358, 368, 380, 358, 364, 355,
                370, 370, 391, 376, 385, 388, 376, 364]]
        ]
    },
    {
        id: 'dmi',
        scale: [[505, '30'], [550, '20']],
        levels: [],
        lines: [
            ['green-line', [574, 574, 577, 538, 544, 544, 547, 550, 553, 556, 560, 565, 565, 571, 572, 523, 535, 535, 487, 490,
                499, 508, 511, 511, 517, 514, 523, 529, 538, 541, 550, 550, 553, 517, 472, 487, 463, 463, 484, 496,
                502, 502, 502, 514, 520, 529, 529, 541, 544, 517, 529, 535, 541, 529, 535, 541, 547, 544, 535, 541,
                544, 544, 553, 556, 559, 565, 568, 553]],
            ['orange', [541, 544, 544, 553, 557, 559, 559, 562, 556, 557, 547, 550, 553, 541, 532, 550, 559, 565, 580, 586,
                589, 586, 580, 586, 577, 580, 580, 583, 577, 580, 562, 568, 571, 580, 589, 592, 598, 601, 565, 574,
                577, 577, 580, 553, 559, 553, 556, 526, 532, 544, 545, 550, 545, 549, 553, 559, 554, 560, 565, 571,
                560, 562, 541, 547, 550, 544, 547, 553]],
            ['main', [553, 553, 553, 556, 559, 562, 565, 568, 571, 574, 577, 580, 580, 577, 574, 574, 574, 574, 565, 556,
                545, 538, 532, 526, 523, 520, 517, 517, 517, 517, 523, 529, 532, 529, 520, 511, 499, 490, 487, 487,
                484, 484, 482, 487, 493, 499, 505, 511, 517, 524, 529, 533, 541, 544, 547, 550, 556, 559, 559, 559,
                562, 562, 565, 568, 571, 574, 574, 577]]
        ]
    },
    {
        id: 'cho',
        scale: [[664, '200,000'], [712, '100,000'], [760, '0']],
        levels: [760],
        lines: [
            ['main', [772, 772, 769, 769, 769, 766, 784, 793, 796, 796, 793, 793, 790, 790, 787, 775, 769, 766, 733, 717,
                721, 727, 733, 739, 742, 751, 754, 757, 760, 760, 763, 751, 754, 736, 703, 694, 667, 658, 673, 676,
                688, 700, 700, 709, 721, 730, 736, 751, 758, 754, 758, 760, 763, 757, 757, 757, 760, 763, 766, 766,
                775, 778, 784, 781, 781, 781, 778, 772]]
        ]
    },
    {
        id: 'mfi',
        scale: [[862, '80'], [904, '60'], [946, '40']],
        levels: [862, 985],
        lines: [
            ['main', [979, 983, 991, 976, 970, 967, 988, 964, 961, 952, 952, 961, 961, 970, 970, 949, 952, 952, 910, 904,
                874, 886, 889, 898, 898, 901, 904, 907, 910, 916, 916, 904, 949, 937, 907, 892, 871, 862, 871, 862,
                862, 859, 853, 859, 859, 865, 856, 871, 883, 886, 916, 937, 931, 943, 940, 956, 976, 961, 940, 928,
                940, 925, 928, 931, 928, 925, 916, 919]]
        ]
    }
];

let plotWidth = BASE_WIDTH;

// Snap to the middle of a pixel so that thin lines stay sharp
const snap = v => Math.floor(v) + 0.5;
const xAt = x => x * plotWidth / BASE_WIDTH;
const barX = i => snap(xAt(FIRST_BAR + i * (LAST_BAR - FIRST_BAR) / (bars.length - 1)) - 0.5);
const line = (cls, x1, y1, x2, y2) => `<line class="${cls}" x1="${x1}" y1="${y1}" x2="${x2}" y2="${y2}"/>`;

function drawBase(height, scale, toY) {
    let out = `<rect class="back" x="0" y="0" width="${plotWidth}" height="${height}"/>`;
    dates.forEach(([x]) => {
        out += line('grid', snap(xAt(x)), 0, snap(xAt(x)), height);
    });
    scale.forEach(([v, label]) => {
        const y = snap(toY(v));
        out += line('grid', 0, y, plotWidth, y);
        out += line('tick', plotWidth, y, plotWidth + 4, y);
        out += `<text x="${plotWidth + 6}" y="${y + 4}">${label}</text>`;
    });
    return out;
}

function frame(height) {
    return `<rect class="frame" x="0.5" y="0.5" width="${plotWidth}" height="${height}"/>`;
}

function drawPrice() {
    const height = 216;
    const toY = v => v / UNIT - 1;
    let out = drawBase(height, priceScale, toY);

    dates.forEach(([x, label]) => {
        const dx = snap(xAt(x));
        out += line('tick', dx, height, dx, height + 4);
        out += `<text x="${dx + 1}" y="${height + 16}" text-anchor="middle">${label}</text>`;
    });

    bars.forEach(([open, high, low, close], i) => {
        const x = barX(i);
        const cls = close < open ? 'up' : 'down';
        out += line(cls, x, toY(high), x, toY(low) + 0.5);
        out += line(cls, x - 6, snap(toY(open)), x, snap(toY(open)));
        out += line(cls, x, snap(toY(close)), x + 6, snap(toY(close)));
    });

    out += frame(height);
    trends.forEach(points => {
        out += `<polyline class="trend" points="${points.map(([x, y]) => `${xAt(x)},${toY(y)}`).join(' ')}"/>`;
    });
    notes.forEach(([x, y, label]) => {
        out += `<text class="note" x="${xAt(x)}" y="${toY(y)}">${label}</text>`;
    });
    document.getElementById('price').innerHTML = out;
}

function drawIndicator(item, index) {
    const height = 63;
    const toY = v => (v - 24 - index * 195) / UNIT;
    let out = drawBase(height, item.scale, toY);

    if (item.histogram) {
        const zero = toY(item.levels[0]);
        item.histogram.forEach((v, i) => {
            const y = toY(v);
            out += `<rect class="bars" x="${barX(i) - 2.5}" y="${Math.round(Math.min(y, zero))}" width="6" height="${Math.round(Math.abs(y - zero))}"/>`;
        });
    }

    item.levels.forEach(v => {
        out += line('level', xAt(22), snap(toY(v)), barX(bars.length - 1), snap(toY(v)));
    });
    item.lines.forEach(([cls, values]) => {
        out += `<polyline class="${cls}" points="${values.map((v, i) => `${barX(i)},${toY(v)}`).join(' ')}"/>`;
    });
    out += frame(height);
    document.getElementById(item.id).innerHTML = out;
}

function drawAll() {
    plotWidth = document.getElementById('price').clientWidth - AXIS_WIDTH;
    drawPrice();
    indicators.forEach(drawIndicator);
}

drawAll();
window.addEventListener('resize', drawAll);
```
